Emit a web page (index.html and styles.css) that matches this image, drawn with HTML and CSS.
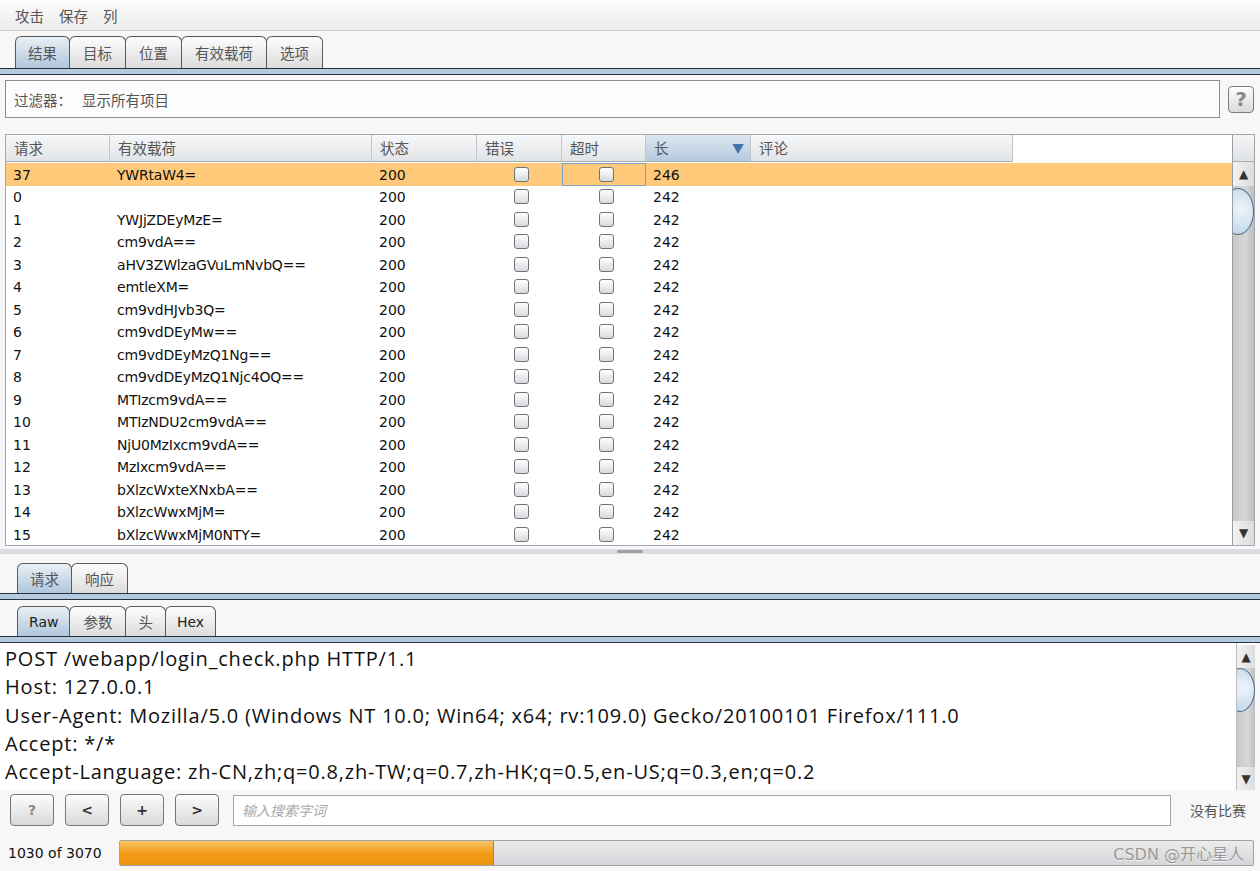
FILE: index.html
```html
<!DOCTYPE html>
<html lang="zh-CN">
<head>
<meta charset="utf-8">
<title>Intruder</title>
<link rel="stylesheet" href="styles.css">
</head>
<body>
<div class="menubar">
  <span>攻击</span><span>保存</span><span>列</span>
</div>

<div class="tabs">
  <div class="tab active">结果</div>
  <div class="tab">目标</div>
  <div class="tab">位置</div>
  <div class="tab">有效载荷</div>
  <div class="tab">选项</div>
</div>
<div class="strip"></div>

<div class="filter-row">
  <div class="filter"><span class="f-label">过滤器：</span><span>显示所有项目</span></div>
  <div class="help">?</div>
</div>

<div class="table-wrap">
  <div class="grid">
    <div class="thead">
      <div class="th c1">请求</div>
      <div class="th c2">有效载荷</div>
      <div class="th c3">状态</div>
      <div class="th c4">错误</div>
      <div class="th c5">超时</div>
      <div class="th c6 sorted"><span>长</span><span class="arrow">▼</span></div>
      <div class="th c7">评论</div>
    </div>
    <div class="tbody">
      <div class="tr sel"><div class="td c1">37</div><div class="td c2">YWRtaW4=</div><div class="td c3">200</div><div class="td c4"><i class="cb"></i></div><div class="td c5 focus"><i class="cb"></i></div><div class="td c6">246</div><div class="td c7"></div></div>
      <div class="tr"><div class="td c1">0</div><div class="td c2"></div><div class="td c3">200</div><div class="td c4"><i class="cb"></i></div><div class="td c5"><i class="cb"></i></div><div class="td c6">242</div><div class="td c7"></div></div>
      <div class="tr"><div class="td c1">1</div><div class="td c2">YWJjZDEyMzE=</div><div class="td c3">200</div><div class="td c4"><i class="cb"></i></div><div class="td c5"><i class="cb"></i></div><div class="td c6">242</div><div class="td c7"></div></div>
      <div class="tr"><div class="td c1">2</div><div class="td c2">cm9vdA==</div><div class="td c3">200</div><div class="td c4"><i class="cb"></i></div><div class="td c5"><i class="cb"></i></div><div class="td c6">242</div><div class="td c7"></div></div>
      <div class="tr"><div class="td c1">3</div><div class="td c2">aHV3ZWlzaGVuLmNvbQ==</div><div class="td c3">200</div><div class="td c4"><i class="cb"></i></div><div class="td c5"><i class="cb"></i></div><div class="td c6">242</div><div class="td c7"></div></div>
      <div class="tr"><div class="td c1">4</div><div class="td c2">emtleXM=</div><div class="td c3">200</div><div class="td c4"><i class="cb"></i></div><div class="td c5"><i class="cb"></i></div><div class="td c6">242</div><div class="td c7"></div></div>
      <div class="tr"><div class="td c1">5</div><div class="td c2">cm9vdHJvb3Q=</div><div class="td c3">200</div><div class="td c4"><i class="cb"></i></div><div class="td c5"><i class="cb"></i></div><div class="td c6">242</div><div class="td c7"></div></div>
      <div class="tr"><div class="td c1">6</div><div class="td c2">cm9vdDEyMw==</div><div class="td c3">200</div><div class="td c4"><i class="cb"></i></div><div class="td c5"><i class="cb"></i></div><div class="td c6">242</div><div class="td c7"></div></div>
      <div class="tr"><div class="td c1">7</div><div class="td c2">cm9vdDEyMzQ1Ng==</div><div class="td c3">200</div><div class="td c4"><i class="cb"></i></div><div class="td c5"><i class="cb"></i></div><div class="td c6">242</div><div class="td c7"></div></div>
      <div class="tr"><div class="td c1">8</div><div class="td c2">cm9vdDEyMzQ1Njc4OQ==</div><div class="td c3">200</div><div class="td c4"><i class="cb"></i></div><div class="td c5"><i class="cb"></i></div><div class="td c6">242</div><div class="td c7"></div></div>
      <div class="tr"><div class="td c1">9</div><div class="td c2">MTIzcm9vdA==</div><div class="td c3">200</div><div class="td c4"><i class="cb"></i></div><div class="td c5"><i class="cb"></i></div><div class="td c6">242</div><div class="td c7"></div></div>
      <div class="tr"><div class="td c1">10</div><div class="td c2">MTIzNDU2cm9vdA==</div><div class="td c3">200</div><div class="td c4"><i class="cb"></i></div><div class="td c5"><i class="cb"></i></div><div class="td c6">242</div><div class="td c7"></div></div>
      <div class="tr"><div class="td c1">11</div><div class="td c2">NjU0MzIxcm9vdA==</div><div class="td c3">200</div><div class="td c4"><i class="cb"></i></div><div class="td c5"><i class="cb"></i></div><div class="td c6">242</div><div class="td c7"></div></div>
      <div class="tr"><div class="td c1">12</div><div class="td c2">MzIxcm9vdA==</div><div class="td c3">200</div><div class="td c4"><i class="cb"></i></div><div class="td c5"><i class="cb"></i></div><div class="td c6">242</div><div class="td c7"></div></div>
      <div class="tr"><div class="td c1">13</div><div class="td c2">bXlzcWxteXNxbA==</div><div class="td c3">200</div><div class="td c4"><i class="cb"></i></div><div class="td c5"><i class="cb"></i></div><div class="td c6">242</div><div class="td c7"></div></div>
      <div class="tr"><div class="td c1">14</div><div class="td c2">bXlzcWwxMjM=</div><div class="td c3">200</div><div class="td c4"><i class="cb"></i></div><div class="td c5"><i class="cb"></i></div><div class="td c6">242</div><div class="td c7"></div></div>
      <div class="tr"><div class="td c1">15</div><div class="td c2">bXlzcWwxMjM0NTY=</div><div class="td c3">200</div><div class="td c4"><i class="cb"></i></div><div class="td c5"><i class="cb"></i></div><div class="td c6">242</div><div class="td c7"></div></div>
    </div>
  </div>
  <div class="vscroll">
    <div class="corner"></div>
    <div class="sbtn">▲</div>
    <div class="track">
      <div class="thumb"></div>
    </div>
    <div class="sbtn">▼</div>
  </div>
</div>

<div class="divider"><div class="band"><i class="grip"></i></div></div>

<div class="tabs tabs-low">
  <div class="tab active">请求</div>
  <div class="tab">响应</div>
</div>
<div class="strip"></div>

<div class="tabs tabs-low tabs-raw">
  <div class="tab active latin">Raw</div>
  <div class="tab">参数</div>
  <div class="tab narrow">头</div>
  <div class="tab latin">Hex</div>
</div>
<div class="strip"></div>

<div class="editor">
  <div class="text">POST /webapp/login_check.php HTTP/1.1
Host: 127.0.0.1
User-Agent: Mozilla/5.0 (Windows NT 10.0; Win64; x64; rv:109.0) Gecko/20100101 Firefox/111.0
Accept: */*
Accept-Language: zh-CN,zh;q=0.8,zh-TW;q=0.7,zh-HK;q=0.5,en-US;q=0.3,en;q=0.2</div>
  <div class="vscroll small">
    <div class="sbtn">▲</div>
    <div class="track">
      <div class="thumb"></div>
    </div>
    <div class="sbtn">▼</div>
  </div>
</div>

<div class="search-row">
  <div class="btn">?</div>
  <div class="btn">&lt;</div>
  <div class="btn">+</div>
  <div class="btn">&gt;</div>
  <div class="search">输入搜索字词</div>
  <div class="nomatch">没有比赛</div>
</div>

<div class="progress-row">
  <div class="count">1030 of 3070</div>
  <div class="bar">
    <div class="fill"></div>
    <div class="mark">CSDN @开心星人</div>
  </div>
</div>
</body>
</html>
```

FILE: styles.css
```css
* { box-sizing: border-box; }
html, body { margin: 0; padding: 0; }
body {
  width: 1260px;
  height: 871px;
  overflow: hidden;
  background: #f7f7f7;
  font-family: "DejaVu Sans", "Noto Sans CJK SC", sans-serif;
  font-size: 14px;
  color: #111;
}

.menubar {
  height: 31px;
  display: flex;
  align-items: center;
  gap: 15px;
  padding: 1px 0 0 15px;
  background: linear-gradient(#fcfcfc, #ebebeb);
  border-bottom: 1px solid #cfcfcf;
  font-family: "Noto Sans CJK SC", sans-serif;
  font-size: 14.5px;
  color: #555;
}

.tabs {
  display: flex;
  height: 32px;
  padding-left: 15px;
  margin-top: 5px;
}
.tab {
  height: 32px;
  padding: 0 13px;
  display: flex;
  align-items: center;
  border: 1px solid #5a5a5a;
  border-bottom: none;
  border-radius: 6px 6px 0 0;
  background: linear-gradient(#fdfdfd, #dcdcdc);
  margin-right: -1px;
  font-family: "Noto Sans CJK SC", sans-serif;
  font-size: 14.5px;
  color: #555;
}
.tab:first-child { padding: 0 12px; }
.tab.narrow { padding: 0 12px; }
.tab.active { background: linear-gradient(#eaf0f5, #afc6dc); }
.tab.latin { font-family: "DejaVu Sans", sans-serif; font-size: 14px; color: #222; padding: 0 11px; }
.strip {
  height: 7px;
  border-top: 1px solid #26323f;
  border-bottom: 1px solid #26323f;
  background: #b6cadf;
}

.filter-row {
  display: flex;
  align-items: center;
  margin: 5px 0 0 5px;
}
.filter {
  width: 1215px;
  height: 38px;
  display: flex;
  align-items: center;
  padding-left: 8px;
  background: #fcfcfc;
  border: 1px solid #8c8c8c;
  font-family: "Noto Sans CJK SC", sans-serif;
  font-size: 14.5px;
  color: #555;
}
.f-label { width: 68px; }
.help {
  width: 26px;
  height: 27px;
  margin-left: 8px;
  border: 1px solid #7c7c7c;
  border-radius: 4px;
  background: linear-gradient(#fefefe, #d9d9d9);
  display: flex;
  align-items: center;
  justify-content: center;
  font-weight: bold;
  font-size: 20px;
  color: #8a8a8a;
}

.table-wrap {
  margin: 16px 0 0 5px;
  width: 1250px;
  height: 412px;
  border: 1px solid #a3a7ab;
  background: #fff;
  display: flex;
}
.grid { flex: 1; display: flex; flex-direction: column; overflow: hidden; }
.thead { display: flex; height: 27px; }
.th {
  height: 27px;
  display: flex;
  align-items: center;
  padding: 0 0 1px 8px;
  background: linear-gradient(#f6f7f8, #e1e4e7);
  border-right: 1px solid #c2c6ca;
  border-bottom: 1px solid #a9adb2;
  font-family: "Noto Sans CJK SC", sans-serif;
  font-size: 14.5px;
  color: #555;
}
.th.sorted { background: linear-gradient(#dde7f0, #b5cadf); justify-content: space-between; padding-right: 6px; }
.arrow { color: #3f74ad; font-size: 12px; }
.c1 { width: 104px; }
.c2 { width: 262px; }
.c3 { width: 105px; }
.c4 { width: 85px; }
.c5 { width: 84px; }
.c6 { width: 105px; }
.c7 { width: 262px; }

.tbody { display: flex; flex-direction: column; padding-top: 1px; }
.tr { display: flex; height: 22.5px; }
.tr.sel { background: #ffc97a; }
.td {
  display: flex;
  align-items: center;
  padding: 1px 0 0 7px;
  font-size: 14px;
  color: #111;
  white-space: nowrap;
}
.td.c2 { letter-spacing: -0.2px; }
.td.c4, .td.c5 { justify-content: center; padding: 0 0 0 4px; }
.td.focus { border: 1px solid #7ea3c8; }
.cb {
  display: block;
  width: 15px;
  height: 15px;
  border: 1px solid #6f7378;
  border-radius: 3px;
  background: linear-gradient(#ffffff, #d8dbde);
}

.vscroll {
  width: 22px;
  display: flex;
  flex-direction: column;
  border-left: 1px solid #9a9ea3;
  background: #e6e6e6;
  overflow: hidden;
}
.corner { height: 27px; background: linear-gradient(#f4f5f6, #dfe2e5); border-bottom: 1px solid #a9adb2; }
.sbtn {
  height: 24px;
  display: flex;
  align-items: center;
  justify-content: center;
  font-size: 12px;
  color: #333;
  background: linear-gradient(90deg, #f2f2f2, #dcdcdc);
}
.track {
  flex: 1;
  background: linear-gradient(90deg, #c9c9c9, #d6d6d6 60%, #bdbdbd);
  overflow: hidden;
}
.thumb {
  width: 32px;
  height: 47px;
  margin: 2px 0 0 -11px;
  border-radius: 50%;
  border: 1.5px solid #4f6c88;
  background: radial-gradient(circle at 60% 45%, #eef5fb, #b8d1e8);
}

.divider { height: 10px; padding-top: 3px; }
.band {
  height: 5px;
  background: #d9dde1;
  display: flex;
  justify-content: center;
  padding-top: 1px;
}
.grip { display: block; width: 26px; height: 3px; border-radius: 2px; background: #9aa0a6; }

.tabs-low { height: 30px; margin-top: 7px; padding-left: 17px; }
.tabs-low .tab { height: 30px; }
.tabs-raw { margin-top: 6px; }

.editor { display: flex; height: 147px; }
.text {
  width: 1236px;
  background: #fff;
  padding: 2px 0 0 5px;
  font-family: "Open Sans", sans-serif;
  font-size: 20px;
  letter-spacing: 0.8px;
  line-height: 28.3px;
  color: #111;
  white-space: pre;
  overflow: hidden;
}
.vscroll.small { width: 19px; border-left: 1px solid #b9bcc0; padding-top: 2px; background: #fff; }
.vscroll.small .sbtn { height: 23px; }
.vscroll.small .thumb { width: 30px; height: 44px; margin: 0 0 0 -12px; }

.search-row {
  height: 40px;
  display: flex;
  align-items: center;
  padding-left: 10px;
  gap: 11px;
}
.btn {
  width: 44px;
  height: 32px;
  border: 1px solid #777;
  border-radius: 4px;
  background: linear-gradient(#fcfcfc, #d9d9d9);
  display: flex;
  align-items: center;
  justify-content: center;
  font-weight: bold;
  font-size: 14px;
  color: #333;
}
.btn:first-child { color: #888; }
.search {
  width: 938px;
  height: 31px;
  margin-left: 3px;
  border: 1px solid #a5a5a5;
  background: #fff;
  display: flex;
  align-items: center;
  padding-left: 8px;
  font-family: "Noto Sans CJK SC", sans-serif;
  font-style: italic;
  font-size: 14px;
  color: #aaa;
}
.nomatch {
  margin-left: 8px;
  font-family: "Noto Sans CJK SC", sans-serif;
  font-size: 14px;
  color: #555;
}

.progress-row {
  height: 41px;
  display: flex;
  align-items: center;
  padding-top: 5px;
}
.count { width: 119px; padding-left: 8px; font-size: 14px; color: #111; }
.bar {
  width: 1135px;
  height: 26px;
  border: 1px solid #9fa2a6;
  border-radius: 2px;
  background: linear-gradient(#ececed, #d3d5d8);
  display: flex;
  align-items: center;
}
.fill {
  width: 374px;
  height: 24px;
  background: linear-gradient(#f9c463, #f29a16 55%, #ee9410);
  border-right: 1px solid #d07f0e;
}
.mark {
  margin-left: auto;
  padding-right: 9px;
  font-family: "DejaVu Sans", "Noto Sans CJK SC", sans-serif;
  font-size: 16px;
  color: #9a9a9a;
  text-shadow: 0 1px 0 #f4f4f4;
}
```
